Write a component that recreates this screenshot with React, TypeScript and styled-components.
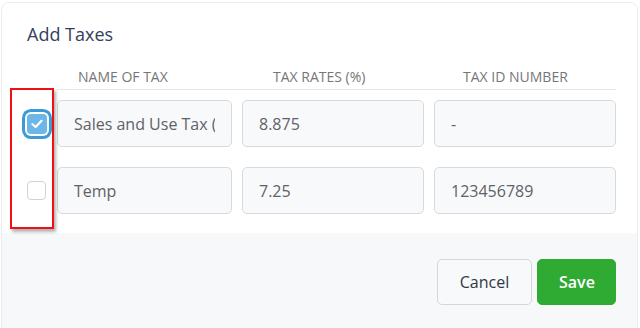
import styled, { createGlobalStyle } from 'styled-components';

const GlobalStyle = createGlobalStyle`
  html, body {
    margin: 0;
    padding: 0;
    background: #ffffff;
    font-family: 'Open Sans', 'Liberation Sans', sans-serif;
    overflow: hidden;
  }
  * {
    box-sizing: border-box;
  }
`;

type Tax = { name: string; rate: string; id: string; checked: boolean };

const taxes: Tax[] = [
  { name: 'Sales and Use Tax (NY)', rate: '8.875', id: '-', checked: true },
  { name: 'Temp', rate: '7.25', id: '123456789', checked: false },
];

const headers = [
  { label: 'NAME OF TAX', indent: 21 },
  { label: 'TAX RATES (%)', indent: 31 },
  { label: 'TAX ID NUMBER', indent: 29 },
];

const CheckIcon = () => (
  <svg width="12" height="10" viewBox="0 0 12 10" fill="none">
    <path d="M1.5 5.2 L4.6 8 L10.5 1.8" stroke="#fff" strokeWidth="2.2" strokeLinecap="round" strokeLinejoin="round" />
  </svg>
);

const App = () => {
  return (
    <>
      <GlobalStyle />
      <Card>
        <Body>
          <Title>Add Taxes</Title>
          <HeaderRow>
            <CheckCell />
            <Columns $header>
              {headers.map((h) => (
                <HeaderCell key={h.label} $indent={h.indent}>
                  {h.label}
                </HeaderCell>
              ))}
            </Columns>
          </HeaderRow>
          <Rows>
            {taxes.map((t) => (
              <Row key={t.name}>
                <CheckCell>
                  <Checkbox $checked={t.checked}>{t.checked && <CheckIcon />}</Checkbox>
                </CheckCell>
                <Columns>
                  <Field readOnly value={t.name} />
                  <Field readOnly value={t.rate} />
                  <Field readOnly value={t.id} />
                </Columns>
              </Row>
            ))}
          </Rows>
          <Highlight />
        </Body>
        <Footer>
          <CancelButton>Cancel</CancelButton>
          <SaveButton>Save</SaveButton>
        </Footer>
      </Card>
    </>
  );
};

export default App;

const Card = styled.div`
  margin: 2px 2px 0 1px;
  height: 340px;
  border: 1px solid #ececec;
  border-radius: 8px 8px 0 0;
  display: flex;
  flex-direction: column;
  overflow: hidden;
`;

const Body = styled.div`
  position: relative;
  background: #ffffff;
  padding: 19px 20px 19px 14px;
`;

const Title = styled.h2`
  margin: 0 0 21px 11px;
  font-size: 18px;
  line-height: 24px;
  font-weight: 400;
  color: #34405a;
`;

const HeaderRow = styled.div`
  display: flex;
`;

const Rows = styled.div`
  display: flex;
  flex-direction: column;
  gap: 20px;
  margin-top: 10px;
`;

const Row = styled.div`
  display: flex;
  align-items: center;
`;

const CheckCell = styled.div`
  width: 41px;
  flex-shrink: 0;
  display: flex;
  justify-content: center;
  align-items: center;
`;

const Columns = styled.div<{ $header?: boolean }>`
  display: grid;
  grid-template-columns: 175px 182px 182px;
  column-gap: 10px;
  width: 559px;
  border-bottom: ${(p) => (p.$header ? '1px solid #e6e6e6' : 'none')};
  padding-bottom: ${(p) => (p.$header ? '2px' : '0')};
`;

const HeaderCell = styled.div<{ $indent: number }>`
  padding-left: ${(p) => p.$indent}px;
  font-size: 14px;
  line-height: 20px;
  color: #767676;
  white-space: nowrap;
`;

const Field = styled.input`
  height: 47px;
  width: 100%;
  padding: 0 16px;
  border: 1px solid #d6d9de;
  border-radius: 5px;
  background: #f8f9fb;
  font-family: 'Open Sans', 'Liberation Sans', sans-serif;
  font-size: 16px;
  color: #606266;
  outline: none;
`;

const Checkbox = styled.div<{ $checked: boolean }>`
  width: ${(p) => (p.$checked ? '20px' : '19px')};
  height: ${(p) => (p.$checked ? '20px' : '19px')};
  border-radius: 4px;
  display: flex;
  align-items: center;
  justify-content: center;
  background: ${(p) => (p.$checked ? '#6cb7e7' : '#ffffff')};
  border: ${(p) => (p.$checked ? 'none' : '1px solid #cfd3d8')};
  box-shadow: ${(p) => (p.$checked ? '0 0 0 2px #ffffff, 0 0 0 5px #3d9ad8' : 'none')};
`;

const Highlight = styled.div`
  position: absolute;
  left: 8px;
  top: 85px;
  width: 44px;
  height: 141px;
  border: 2px solid #ee1111;
  box-shadow: 2px 3px 3px rgba(0, 0, 0, 0.3);
  pointer-events: none;
`;

const Footer = styled.div`
  flex: 1;
  background: #f7f8fa;
  display: flex;
  justify-content: flex-end;
  align-items: flex-start;
  gap: 5px;
  padding: 26px 21px 0 0;
`;

const BaseButton = styled.button`
  height: 46px;
  padding: 0 21px;
  border-radius: 5px;
  font-family: 'Open Sans', 'Liberation Sans', sans-serif;
  font-size: 16px;
  cursor: pointer;
`;

const CancelButton = styled(BaseButton)`
  background: #f8f9fa;
  border: 1px solid #d3d6db;
  color: #2f3747;
  font-weight: 500;
  width: 95px;
`;

const SaveButton = styled(BaseButton)`
  background: #2faa33;
  border: 1px solid #2faa33;
  color: #ffffff;
  font-weight: 600;
  width: 79px;
`;
